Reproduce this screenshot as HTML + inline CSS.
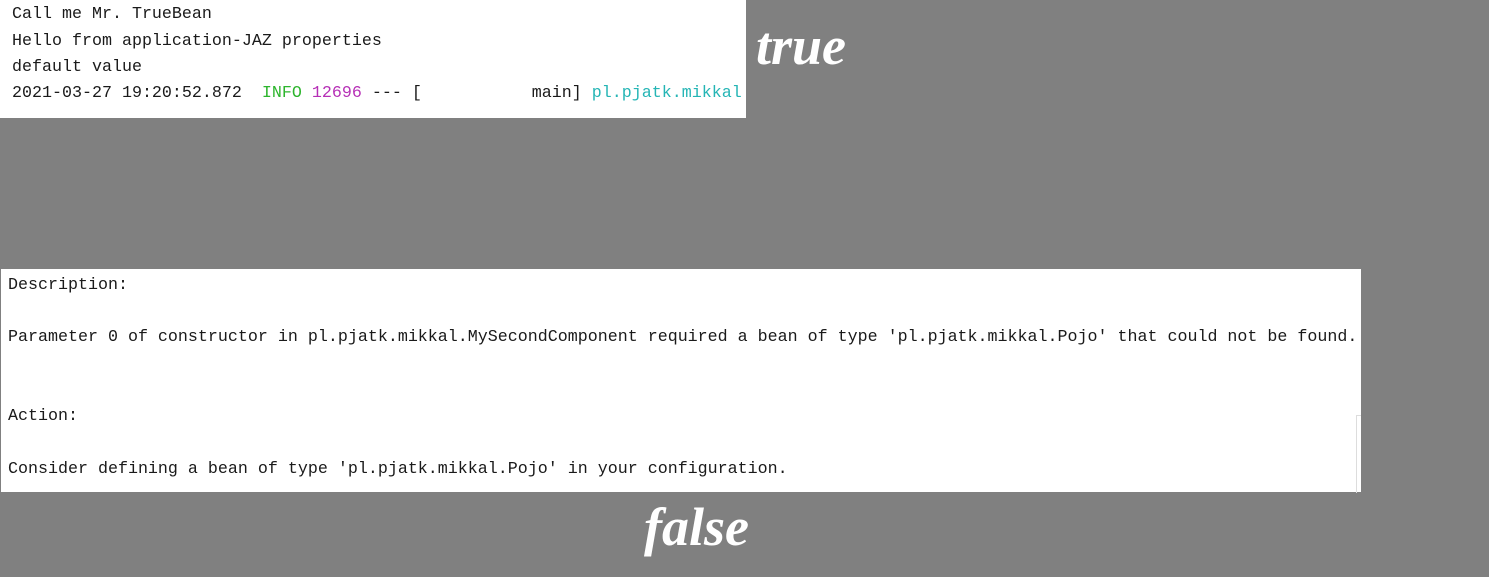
<!DOCTYPE html>
<html><head><style>
html,body{margin:0;padding:0;}
body{width:1489px;height:577px;background:#808080;position:relative;overflow:hidden;}
.box{position:absolute;background:#fff;font-family:"Liberation Mono",monospace;font-size:16.67px;color:#1a1a1a;}
.l{position:absolute;white-space:pre;line-height:20px;}
.big{position:absolute;font-family:"Liberation Serif",serif;font-weight:bold;font-style:italic;color:#fff;font-size:54px;line-height:54px;}
</style></head><body>
<div class="box" style="left:0;top:0;width:746px;height:118px;">
<div class="l" style="left:12px;top:5px">Call me Mr. TrueBean</div>
<div class="l" style="left:12px;top:32px">Hello from application-JAZ properties</div>
<div class="l" style="left:12px;top:58px">default value</div>
<div class="l" style="left:12px;top:84px">2021-03-27 19:20:52.872  <span style="color:#2db52d">INFO</span> <span style="color:#b62fb6">12696</span> --- [           main] <span style="color:#25b5b5">pl.pjatk.mikkal</span></div>
</div>
<div class="big" style="left:756px;top:19px">true</div>
<div class="box" style="left:1px;top:269px;width:1360px;height:223px;">
<div class="l" style="left:7px;top:7px">Description:</div>
<div class="l" style="left:7px;top:59px">Parameter 0 of constructor in pl.pjatk.mikkal.MySecondComponent required a bean of type 'pl.pjatk.mikkal.Pojo' that could not be found.</div>
<div class="l" style="left:7px;top:138px">Action:</div>
<div class="l" style="left:7px;top:191px">Consider defining a bean of type 'pl.pjatk.mikkal.Pojo' in your configuration.</div>
<div style="position:absolute;left:1355px;top:146px;width:4px;height:77px;border-left:1px solid #ddd;border-top:1px solid #ddd;"></div>
</div>
<div class="big" style="left:644px;top:500px">false</div>
</body></html>
